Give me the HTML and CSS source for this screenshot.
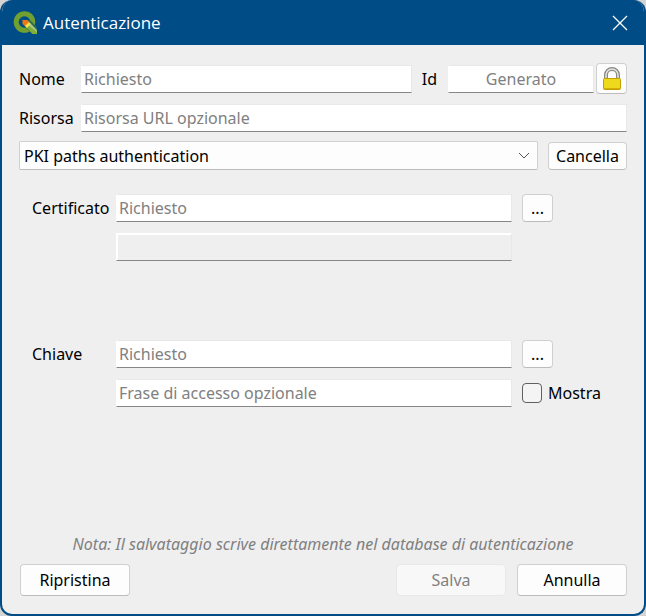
FILE: index.html
```html
<!DOCTYPE html>
<html lang="it">
<head>
  <meta charset="UTF-8">
  <meta name="viewport" content="width=device-width, initial-scale=1.0">
  <title>Autenticazione</title>
  <link rel="stylesheet" href="styles.css">
</head>
<body>
  <div class="window">
    <header class="titlebar">
      <svg class="logo" viewBox="0 0 24 24" aria-hidden="true">
        <circle cx="11.500" cy="11" r="8.300" fill="none" stroke="#6fa030" stroke-width="5"/>
        <path d="M12 9h5l7.500 8v6h-5.500l-7-7z" fill="#2f6b55"/>
        <path d="M12.500 15.500l4-4 7.500 8v3.500h-4.500z" fill="#7fae3a"/>
        <path d="M14.500 13.500l2-2 7.500 8v1.500z" fill="#a9c98a"/>
        <path d="M11.500 14.500l4-4 2 2.500-3.500 4z" fill="#f5e04d"/>
        <path d="M9.500 9h4.500l2 2-4 4-2.500-2z" fill="#ee7913"/>
      </svg>
      <h1>Autenticazione</h1>
      <button class="close" type="button" aria-label="Chiudi">
        <svg viewBox="0 0 16 16"><path d="M1 1l14 14M15 1L1 15" fill="none" stroke="#fff" stroke-width="1.300"/></svg>
      </button>
    </header>

    <form class="content">
      <div class="row">
        <label class="label" for="nome">Nome</label>
        <input class="field" id="nome" type="text" placeholder="Richiesto">
        <label class="id-label" for="id">Id</label>
        <input class="field id-field" id="id" type="text" placeholder="Generato">
        <button class="btn lock" type="button" aria-label="Blocca Id">
          <svg viewBox="0 0 20 24">
            <path d="M4 12V8a6 6 0 0 1 12 0v4" fill="none" stroke="#888a85" stroke-width="4"/>
            <path d="M4 12V8a6 6 0 0 1 12 0v4" fill="none" stroke="#e4e4e2" stroke-width="1.500"/>
            <rect x="1.500" y="11.500" width="17" height="11" rx="1" fill="#eed91d" stroke="#c4a000"/>
            <path d="M2 21.500h16" stroke="#d3ad08"/>
          </svg>
        </button>
      </div>

      <div class="row resource">
        <label class="label" for="risorsa">Risorsa</label>
        <input class="field" id="risorsa" type="text" placeholder="Risorsa URL opzionale">
      </div>

      <div class="row method">
        <select class="select" aria-label="Metodo di autenticazione">
          <option>PKI paths authentication</option>
        </select>
        <button class="btn clear" type="button">Cancella</button>
      </div>

      <div class="pki">
        <label for="certificato">Certificato</label>
        <input class="field" id="certificato" type="text" placeholder="Richiesto">
        <button class="btn browse" type="button" aria-label="Sfoglia certificato">...</button>
        <input class="field info" type="text" aria-label="Dettagli certificato" readonly>
      </div>

      <div class="pki key">
        <label for="chiave">Chiave</label>
        <input class="field" id="chiave" type="text" placeholder="Richiesto">
        <button class="btn browse" type="button" aria-label="Sfoglia chiave">...</button>
        <input class="field pass" type="password" aria-label="Frase di accesso" placeholder="Frase di accesso opzionale">
        <label class="show"><input type="checkbox">Mostra</label>
      </div>

      <p class="note">Nota: Il salvataggio scrive direttamente nel database di autenticazione</p>

      <div class="actions">
        <button class="btn reset" type="reset">Ripristina</button>
        <button class="btn" type="submit" disabled>Salva</button>
        <button class="btn" type="button">Annulla</button>
      </div>
    </form>
  </div>
</body>
</html>
```
FILE: styles.css
```css
* {
  box-sizing: border-box;
}

body {
  margin: 0;
  background-color: #d4d4d4;
  color: #000;
  font-family: "Noto Sans", sans-serif;
  font-size: 16px;
  line-height: 20px;
}

button, input, select {
  margin: 0;
  color: inherit;
  font: inherit;
}

.window {
  display: flex;
  flex-direction: column;
  min-height: 100vh;
  border: 2px solid #004c87;
  border-top: 0;
  border-radius: 12px;
  background-color: #efefef;
  overflow: hidden;
}

.titlebar {
  display: flex;
  align-items: center;
  height: 45px;
  padding: 0 16px 0 11px;
  background-color: #004c87;
  color: #fff;
}

.logo {
  width: 24px;
  height: 24px;
}

h1 {
  flex: 1;
  margin: 0 0 0 6px;
  font-family: "Open Sans", sans-serif;
  font-size: 17px;
  font-weight: 400;
}

.close {
  display: flex;
  padding: 0;
  border: 0;
  background: none;
}

.close svg {
  width: 16px;
  height: 16px;
}

.content {
  display: flex;
  flex: 1;
  flex-direction: column;
  padding: 18px 17px;
}

.row {
  display: flex;
  align-items: center;
  margin-bottom: 10px;
}

.label {
  width: 62px;
}

.field {
  flex: 1;
  min-width: 0;
  height: 28px;
  padding: 0 2px;
  border: 1px solid #e8e8e8;
  border-bottom-color: #868686;
  border-left-color: #fff;
  border-radius: 0;
  background-color: #fff;
}

.field::placeholder {
  color: #808080;
  opacity: 1;
}

.id-label {
  margin: 0 11px 0 10px;
}

.id-field {
  flex: 0 0 146px;
  text-align: center;
}

.btn {
  border: 1px solid #d0d0d0;
  border-bottom-color: #bcbcbc;
  border-radius: 4px;
  padding: 0;
  background-color: #fdfdfd;
}

.lock {
  display: flex;
  align-items: center;
  justify-content: center;
  width: 31px;
  height: 31px;
  margin-left: 2px;
}

.lock svg {
  width: 20px;
  height: 24px;
}

.resource {
  margin-bottom: 9px;
}

.method {
  margin: 0;
  gap: 10px;
}

.select {
  flex: 1;
  height: 29px;
  padding: 0 4px;
  border: 1px solid #d0d0d0;
  border-bottom-color: #bcbcbc;
  border-radius: 2px;
  appearance: none;
  background: #fdfdfd url("data:image/svg+xml,%3Csvg xmlns='http://www.w3.org/2000/svg' width='12' height='8'%3E%3Cpath d='M1 1l5 5 5-5' fill='none' stroke='%23555'/%3E%3C/svg%3E") no-repeat right 7px center;
}

.clear {
  width: 79px;
  height: 28px;
}

.pki {
  display: grid;
  grid-template-columns: 74px 1fr 105px;
  align-items: center;
  gap: 11px 10px;
  margin: 24px 0 0 13px;
}

.pki label:first-child {
  white-space: nowrap;
}

.browse {
  width: 31px;
  height: 28px;
}

.info, .pass {
  grid-column: 2;
}

.info {
  border-top-color: #fff;
  box-shadow: inset 1px 1px #fff;
  background-color: #efefef;
}

.key {
  margin-top: 79px;
}

.show {
  display: flex;
  align-items: center;
  gap: 6px;
}

.show input {
  width: 20px;
  height: 20px;
  border: 1px solid #606060;
  border-radius: 4px;
  appearance: none;
  background-color: #f4f4f4;
}

.show input:checked {
  background-color: #004c87;
}

.note {
  margin: auto 0 10px;
  color: #808080;
  font-style: italic;
  text-align: center;
}

.actions {
  display: flex;
  gap: 11px;
  padding-left: 1px;
}

.actions .btn {
  width: 110px;
  height: 32px;
}

.actions .reset {
  margin-right: auto;
}

.btn:disabled {
  border-color: #e8e8e8;
  background-color: #f8f8f8;
  color: #808080;
}
```
